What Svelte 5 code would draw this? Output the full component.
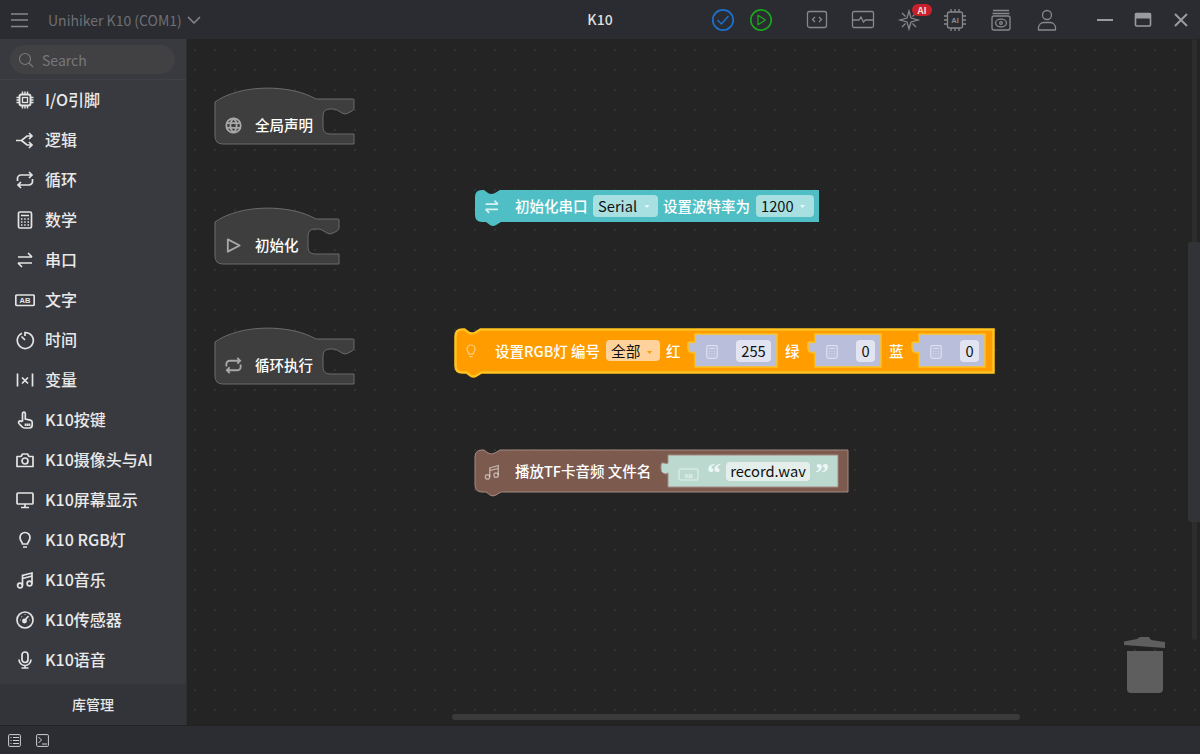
<script>
  const icons = {
    chip: '<rect x="4.5" y="4.5" width="11" height="11" rx="2" stroke-width="1.9"/><rect x="7.5" y="7.5" width="5" height="5" stroke-width="1.3"/><path d="M1.5 7.5h3M1.5 10h3M1.5 12.5h3M15.5 7.5h3M15.5 10h3M15.5 12.5h3M7.5 1.5v3M10 1.5v3M12.5 1.5v3M7.5 15.5v3M10 15.5v3M12.5 15.5v3" stroke-width="1.4"/>',
    logic: '<path d="M1 10.500h5.500L12 6h5M6.500 10.500l5.500 4.500h5M14 3l3 3-3 3M14 12l3 3-3 3"/>',
    loop: '<path d="M2.500 11V8.500A3.500 3.500 0 0 1 6 5h11M14 2l3 3-3 3M17.500 9v2.500a3.500 3.500 0 0 1-3.500 3.500H3M6 12l-3 3 3 3"/>',
    calc: '<rect x="3.500" y="2" width="13" height="16" rx="1.500"/><path d="M6 5.500h8M6 9h1.500M9.200 9h1.500M12.500 9h1.500M6 12h1.500M9.200 12h1.500M12.500 12h1.500M6 15h1.500M9.200 15h1.500M12.500 15h1.500" stroke-width="1.300"/>',
    serial: '<path d="M3 7h14M13 3l4 4M17 13H3M7 17l-4-4"/>',
    ab: '<rect x="0.800" y="5" width="18.400" height="10.500" rx="1.200"/><text x="10" y="13" text-anchor="middle" font-size="7.500" font-weight="700" font-family="Liberation Sans" fill="#e4e4e4" stroke="none">AB</text>',
    timer: '<path d="M7 3.200a8 8 0 1 0 3-.7V6M6.500 6.500L10 10"/>',
    variable: '<path d="M2.500 3.500v13M17.500 3.500v13M7 7.500l6 6M13 7.500l-6 6"/>',
    hand: '<path d="M7.500 11V3.500a1.400 1.400 0 0 1 2.800 0V9l5 1.200c1.200.3 1.900 1 1.900 2.300V15c0 1.800-1.200 3-3 3H9.500c-1 0-1.800-.5-2.400-1.200L4 13.500c-.8-1-.4-2 .4-2.400.7-.3 1.400-.1 1.900.4zM10.500 13.500V16M12.500 13.500V16M14.500 13.500V16"/>',
    camera: '<path d="M2 6.500h4l1.500-2.500h5L14 6.500h4v10H2z" stroke-linejoin="round"/><circle cx="10" cy="11" r="3"/>',
    monitor: '<rect x="2" y="3" width="16" height="11" rx="1"/><path d="M10 14v3.500M6 17.500h8"/>',
    bulb: '<path d="M7.500 14c0-2-2.500-3-2.500-6.500a5 5 0 0 1 10 0C15 11 12.500 12 12.500 14zM8 17h4"/>',
    music: '<path d="M7.500 15.500V5.500L17 3v10.500M7.500 8.500L17 6"/><circle cx="5" cy="15.500" r="2.400"/><circle cx="14.500" cy="13.500" r="2.400"/>',
    gauge: '<circle cx="10" cy="10" r="8"/><path d="M10 10l3.500-4M5 10h.5M6.500 6.500l.4.4M10 4.500V5M14.500 10h.5"/><circle cx="9.500" cy="11" r="1.600" fill="#e4e4e4"/>',
    mic: '<rect x="7" y="2" width="6" height="10.500" rx="3"/><path d="M4 9.500a6 6 0 0 0 12 0M10 15.500V18M6.500 18h7"/>',
    play: '<path d="M4 3.500v13L16.500 10z" stroke-linejoin="round"/>',
    globe: '<circle cx="10" cy="10" r="7.600"/><path d="M2.500 7.500h15M2.500 12.500h15M10 2.400c-4.400 4-4.400 11.200 0 15.200M10 2.400c4.400 4 4.400 11.200 0 15.200"/>'
  };
  const items = [
    ['chip', 'I/O引脚'], ['logic', '逻辑'], ['loop', '循环'], ['calc', '数学'], ['serial', '串口'],
    ['ab', '文字'], ['timer', '时间'], ['variable', '变量'], ['hand', 'K10按键'], ['camera', 'K10摄像头与AI'],
    ['monitor', 'K10屏幕显示'], ['bulb', 'K10 RGB灯'], ['music', 'K10音乐'], ['gauge', 'K10传感器'], ['mic', 'K10语音']
  ];
  const hat = (w) => {
    const r = 215 + w;
    return `M215 105V102C240 84 290 84 316 99H${r - 1}Q${r} 99 ${r} 100V108Q${r} 110 ${r - 2} 111L${r - 6} 113Q${r - 9} 115 ${r - 12} 113L${r - 17} 110Q${r - 19} 109 ${r - 21} 109H${r - 24}Q${r - 31} 109 ${r - 31} 116V127Q${r - 31} 134 ${r - 24} 134H${r}V144H223Q215 144 215 136Z`;
  };
  const stack = (x, y, w, h) =>
    `M${x} ${y + 7}Q${x} ${y} ${x + 7} ${y}H${x + 9}L${x + 13} ${y + 3}Q${x + 16} ${y + 5} ${x + 20} ${y + 3}L${x + 25} ${y}H${x + w}V${y + h}H${x + 26}L${x + 21} ${y + h + 3}Q${x + 18} ${y + h + 5} ${x + 15} ${y + h + 3}L${x + 11} ${y + h}H${x + 7}Q${x} ${y + h} ${x} ${y + h - 7}Z`;
  const socket = (x, y, w, h) =>
    `M${x} ${y}H${x + w}V${y + h}H${x}V${y + 18}Q${x - 2} ${y + 20} ${x - 5} ${y + 18}Q${x - 7} ${y + 17} ${x - 7} ${y + 14}V${y + 10}Q${x - 7} ${y + 7} ${x - 4} ${y + 8}Q${x - 1} ${y + 9} ${x} ${y + 8}Z`;
  const sockets = [[695, 82], [815, 66], [919, 66]];
  const hats = [
    { y: 0, w: 139, icon: 'globe', label: '全局声明' },
    { y: 120, w: 124, icon: 'play', label: '初始化' },
    { y: 240, w: 139, icon: 'loop', label: '循环执行' }
  ];
  const orangeFields = [[736, 35, '255', 753.5], [856, 19, '0', 865.5], [960, 19, '0', 969.5]];
</script>

<div class="app">
  <header class="top">
    <div class="left">
      <svg class="menu" width="18" height="16" viewBox="0 0 18 16"><path d="M0 2h17M0 8h17M0 14.500h17" /></svg>
      <span class="device">Unihiker K10 (COM1)</span>
      <svg class="chev" width="14" height="8" viewBox="0 0 14 8"><path d="M1 1l6 6 6-6" /></svg>
    </div>
    <div class="title">K10</div>
    <div class="tools">
      <svg class="tb" viewBox="0 0 24 24"><circle cx="12" cy="12" r="10.200" stroke="#1a73d0" stroke-width="1.700" /><path d="M6.500 12l4 4 7-8" stroke="#1a73d0" stroke-width="1.400" /></svg>
      <svg class="tb" viewBox="0 0 24 24"><circle cx="12" cy="12" r="10.200" stroke="#1ba51e" stroke-width="1.700" /><path d="M9 7.200v9.600l7.500-4.800z" stroke="#1ba51e" stroke-width="1.300" stroke-linejoin="round" /></svg>
      <svg class="tb lead" viewBox="0 0 24 24"><rect x="2.500" y="3.500" width="19" height="16" rx="2" /><path d="M10 9l-2.500 2.500L10 14M14 9l2.500 2.500L14 14" /></svg>
      <svg class="tb" viewBox="0 0 24 24"><rect x="1.500" y="3.500" width="21" height="16" rx="1.500" /><path d="M1.500 12h6.500l2-3 2.500 5 1.800-2h8.200" /></svg>
      <div class="star">
        <svg class="tb" viewBox="0 0 24 24"><path d="M12 3l2 7 7 2-7 2-2 7-2-7-7-2 7-2zM5 5l3.500 3.500M19 5l-3.500 3.500M5 19l3.500-3.500M19 19l-3.500-3.500" /></svg>
        <span class="badge">AI</span>
      </div>
      <svg class="tb" viewBox="0 0 24 24"><rect x="4.500" y="4" width="15" height="16" rx="2" /><path d="M8 1v3M12 1v3M16 1v3M8 20v3M12 20v3M16 20v3M1 8h3.500M1 12h3.500M1 16h3.500M19.500 8H23M19.500 12H23M19.500 16H23" /><text x="12" y="15" text-anchor="middle" font-size="7.500" font-weight="700" font-family="Liberation Sans" fill="#8b8c90" stroke="none">AI</text></svg>
      <svg class="tb" viewBox="0 0 24 24"><path d="M4 2.500h16M3.500 5.500h17" /><rect x="3" y="8" width="18" height="14" rx="2" /><ellipse cx="12" cy="15" rx="5.500" ry="3.800" /><circle cx="12" cy="15" r="1.300" /></svg>
      <svg class="tb" viewBox="0 0 24 24"><circle cx="12" cy="7" r="4.500" /><path d="M3.500 22v-2.500c0-3 3-5 5-5h7c2 0 5 2 5 5V22z" stroke-linejoin="round" /></svg>
      <svg class="tb win lead2" viewBox="0 0 24 24"><path d="M4 12h16" stroke-width="2" /></svg>
      <svg class="tb win" viewBox="0 0 24 24"><rect x="4.500" y="5.500" width="15" height="12.500" rx="1" stroke-width="1.600" /><rect x="4" y="5" width="16" height="5.500" fill="#9a9b9e" stroke="none" /></svg>
      <svg class="tb win" viewBox="0 0 24 24"><path d="M6 6l12 12M18 6L6 18" stroke-width="2" /></svg>
    </div>
  </header>

  <div class="main">
    <aside class="side">
      <div class="search-wrap">
        <div class="search">
          <svg width="16" height="16" viewBox="0 0 16 16"><circle cx="7" cy="7" r="5.500" /><path d="M11 11l4 4" /></svg>
          <span>Search</span>
        </div>
      </div>
      <nav class="list">
        {#each items as [icon, label]}
          <div class="item">
            <svg class="ico" viewBox="0 0 20 20">{@html icons[icon]}</svg>
            <span class="name">{label}</span>
          </div>
        {/each}
      </nav>
      <div class="lib">库管理</div>
    </aside>

    <section class="canvas">
      <svg class="blocks" width="1014" height="686" viewBox="186 39 1014 686">
        {#each hats as h}
          <g transform="translate(0 {h.y})">
            <path class="hat" d={hat(h.w)} />
            <g class="hat-ico" transform="translate(224 116) scale(0.95)">{@html icons[h.icon]}</g>
            <text class="lab" x="255" y="131">{h.label}</text>
          </g>
        {/each}

        <path d={stack(475, 190, 344, 32)} fill="#4fbfc5" />
        <g class="blk-ico" transform="translate(483 198) scale(0.88)">{@html icons.serial}</g>
        <text class="lab" x="515" y="212">初始化串口</text>
        <rect x="593" y="195" width="65" height="22" rx="4" fill="#a8e0e2" />
        <text class="val" x="598" y="212">Serial</text>
        <path d="M644.500 205l2.500 3 2.500-3z" fill="#fff" opacity=".75" />
        <text class="lab" x="663" y="212">设置波特率为</text>
        <rect x="756" y="195" width="58" height="22" rx="4" fill="#a8e0e2" />
        <text class="val" x="761" y="212">1200</text>
        <path d="M800 205l2.500 3 2.500-3z" fill="#fff" opacity=".75" />

        <path d={stack(455.5, 329.5, 538, 43)} fill="#ff9c00" stroke="#ffc21e" stroke-width="2.500" />
        <g class="blk-ico pale" transform="translate(463 343) scale(0.8)">{@html icons.bulb}</g>
        <text class="lab" x="495" y="357">设置RGB灯 编号</text>
        <rect x="606" y="340" width="54" height="21" rx="4" fill="#ffd29b" />
        <text class="val" x="611" y="357">全部</text>
        <path d="M647 351l2.500 3 2.500-3z" fill="#ff9c00" />
        <text class="lab" x="666" y="357">红</text>
        <text class="lab" x="785" y="357">绿</text>
        <text class="lab" x="889" y="357">蓝</text>
        {#each sockets as [x, w]}
          <path d={socket(x, 334, w, 33)} fill="#b9bfdb" stroke="#ffc21e" stroke-width="1.500" />
          <g class="blk-ico pale" transform="translate({x + 9} 344) scale(0.8)">{@html icons.calc}</g>
        {/each}
        {#each orangeFields as [x, w, t, c]}
          <rect x={x} y="340" width={w} height="22" rx="4" fill="#e2e5f1" />
          <text class="val" x={c} y="357" text-anchor="middle">{t}</text>
        {/each}

        <path d={stack(475, 450, 373, 42)} fill="#7d5a4e" stroke="#a38a82" stroke-width="1" />
        <g class="blk-ico pale" transform="translate(483 463) scale(0.9)">{@html icons.music}</g>
        <text class="lab" x="515" y="477">播放TF卡音频 文件名</text>
        <path d={socket(668, 455, 170, 32)} fill="#bcd9d0" stroke="#a38a82" stroke-width="1" />
        <rect x="679" y="469" width="19" height="11" rx="1" fill="none" stroke="#e6f1ee" stroke-width="1" />
        <text x="688.5" y="477.5" text-anchor="middle" font-size="6" font-weight="700" font-family="Liberation Sans" fill="#e6f1ee">AB</text>
        <text class="quote" x="707" y="482">“</text>
        <rect x="726" y="462" width="84" height="19" rx="4" fill="#e4efec" />
        <text class="val" x="768" y="477" text-anchor="middle">record.wav</text>
        <text class="quote" x="815" y="482">”</text>
      </svg>

      <div class="rail"></div>
      <div class="flyout"></div>
      <div class="hbar"></div>
      <svg class="trash" width="44" height="58" viewBox="0 0 44 58">
        <path d="M1 5.500L14 3l3-2h9l2 3 14 2v6L1 9z" />
        <path d="M4 15h36v38q0 4-4 4H8q-4 0-4-4z" />
      </svg>
    </section>
  </div>

  <footer class="bottom">
    <svg width="13" height="13" viewBox="0 0 13 13"><rect x=".6" y=".6" width="11.800" height="11.800" rx="1" /><path d="M2.500 3.500h1M5 3.500h6M2.500 6.500h1M5 6.500h6M2.500 9.500h1M5 9.500h6" /></svg>
    <svg width="13" height="13" viewBox="0 0 13 13"><rect x=".6" y=".6" width="11.800" height="11.800" rx="1" /><path d="M2.500 3l3 3-3 3M6 10h5" /></svg>
  </footer>
</div>

<style>
  :global(body) {
    margin: 0;
    background: #242424;
  }
  .app {
    width: 1200px;
    height: 754px;
    display: flex;
    flex-direction: column;
    overflow: hidden;
    font-family: "Noto Sans CJK SC", "Noto Sans", sans-serif;
  }
  svg {
    fill: none;
    display: block;
    flex: none;
  }
  .top {
    height: 39px;
    flex: none;
    display: grid;
    grid-template-columns: 1fr auto 1fr;
    align-items: center;
    background: #2b2c31;
  }
  .left {
    display: flex;
    align-items: center;
    padding-left: 11px;
  }
  .menu {
    stroke: #85878b;
    stroke-width: 1.600;
  }
  .device {
    margin-left: 19px;
    font-size: 14px;
    color: #6e7074;
  }
  .chev {
    margin-left: 5px;
    stroke: #85878b;
    stroke-width: 1.500;
  }
  .title {
    font-size: 14px;
    font-weight: 500;
    color: #dfdfdf;
    padding-bottom: 1px;
  }
  .tools {
    display: flex;
    align-items: center;
    justify-content: flex-end;
    gap: 22px;
    padding-right: 7px;
  }
  .tb {
    width: 24px;
    height: 24px;
    stroke: #87888c;
    stroke-width: 1.300;
  }
  .tools > svg:nth-child(2) {
    margin-left: -8px;
  }
  .tb.lead {
    margin-left: 10px;
  }
  .tb.win {
    margin-left: -8px;
    stroke: #9a9b9e;
  }
  .tb.lead2 {
    margin-left: 12px;
  }
  .star {
    position: relative;
  }
  .badge {
    position: absolute;
    left: 15px;
    top: -4px;
    width: 20px;
    height: 12px;
    border-radius: 6px;
    background: #c9212b;
    color: #f2d9d9;
    font-size: 9.500px;
    font-weight: 700;
    line-height: 12px;
    text-align: center;
  }
  .main {
    flex: 1;
    display: flex;
    min-height: 0;
  }
  .side {
    width: 186px;
    flex: none;
    display: flex;
    flex-direction: column;
    background: #393a3f;
    box-shadow: 1px 0 0 #2f2f32;
    z-index: 1;
  }
  .search-wrap {
    height: 41px;
    box-sizing: border-box;
    padding: 6px 11px 4px 10px;
    border-bottom: 1px solid #404146;
  }
  .search {
    height: 29px;
    border-radius: 15px;
    background: #414143;
    display: flex;
    align-items: center;
    gap: 8px;
    padding-left: 8px;
    font-size: 14px;
    color: #77787b;
  }
  .search svg {
    stroke: #77787b;
    stroke-width: 1.200;
  }
  .list {
    flex: 1;
    overflow: hidden;
  }
  .item {
    height: 40px;
    display: flex;
    align-items: center;
    gap: 10px;
    padding-left: 15px;
    font-size: 16px;
    font-weight: 500;
    color: #e9e9e9;
  }
  .name {
    padding-bottom: 2px;
  }
  .ico {
    width: 20px;
    height: 20px;
    stroke: #e4e4e4;
    stroke-width: 1.700;
  }
  .lib {
    height: 41px;
    flex: none;
    display: flex;
    align-items: center;
    justify-content: center;
    box-sizing: border-box;
    padding-bottom: 2px;
    background: #33343a;
    font-size: 14px;
    font-weight: 500;
    color: #e6e6e6;
  }
  .canvas {
    flex: 1;
    position: relative;
    overflow: hidden;
    background-color: #242424;
    background-image: radial-gradient(circle at 1px 1px, #333 0.8px, transparent 1.1px);
    background-size: 20px 20px;
    background-position: 8px 10px;
  }
  .blocks {
    position: absolute;
    left: 0;
    top: 0;
  }
  .hat {
    fill: #3e3e3e;
    stroke: #6a6a6a;
    stroke-width: 1;
  }
  .hat-ico {
    stroke: #a8a8a8;
    stroke-width: 1.900;
  }
  .blk-ico {
    stroke: #d9f1f2;
    stroke-width: 1.900;
  }
  .blk-ico.pale {
    stroke: rgba(255, 255, 255, 0.5);
    stroke-width: 1.500;
  }
  .lab {
    font-size: 14.500px;
    font-weight: 500;
    fill: #fff;
  }
  .val {
    font-size: 14.700px;
    fill: #111;
  }
  .quote {
    font-size: 28px;
    font-weight: 700;
    font-family: "Liberation Serif", serif;
    fill: #f0f6f4;
  }
  .rail {
    position: absolute;
    left: 1006px;
    top: 0;
    width: 5px;
    height: 601px;
    background: #2d2d2d;
    border-radius: 3px;
  }
  .flyout {
    position: absolute;
    left: 1002px;
    top: 203px;
    width: 12px;
    height: 280px;
    background: #323336;
    border-radius: 3px 0 0 3px;
  }
  .hbar {
    position: absolute;
    left: 266px;
    top: 675px;
    width: 568px;
    height: 6px;
    border-radius: 3px;
    background: #3a3a3a;
  }
  .trash {
    position: absolute;
    left: 937px;
    top: 597px;
    fill: #5e5e5e;
  }
  .bottom {
    height: 29px;
    flex: none;
    display: flex;
    align-items: center;
    gap: 15px;
    padding-left: 8px;
    background: #2b2d32;
    border-top: 1px solid #222;
    box-sizing: border-box;
  }
  .bottom svg {
    stroke: #cfd0d2;
    stroke-width: 1;
  }
</style>
